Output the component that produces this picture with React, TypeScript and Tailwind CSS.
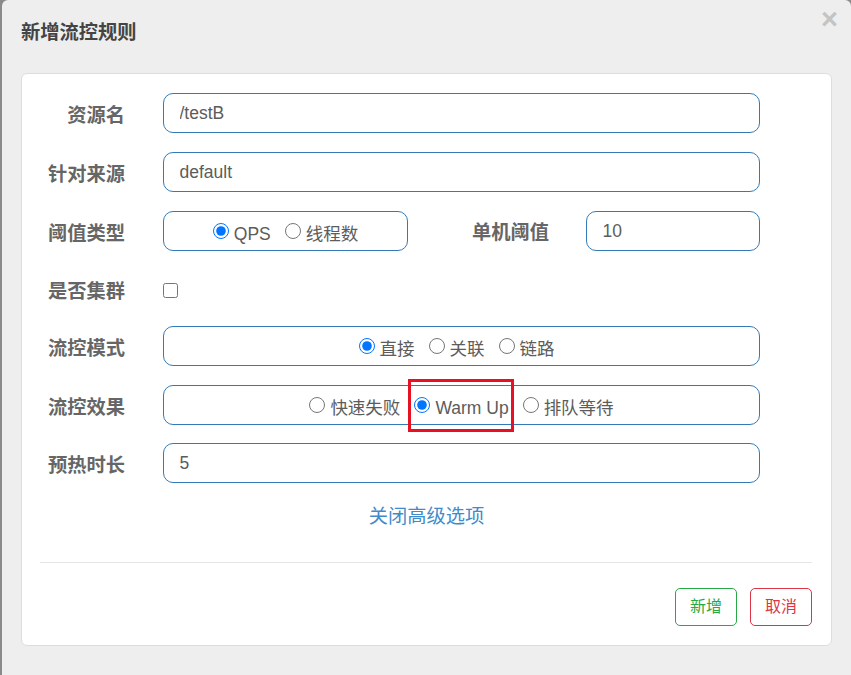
import React from 'react';

const fontStack = "font-['Liberation_Sans','Noto_Sans_CJK_SC',sans-serif]";

const Label = ({ children }: { children: React.ReactNode }) => (
  <label className="w-[103px] shrink-0 pt-[6px] text-right text-[19.25px] leading-[28px] font-bold text-[#666]">{children}</label>
);

const TextInput = ({ value, className = 'flex-1' }: { value: string; className?: string }) => (
  <input
    type="text"
    readOnly
    defaultValue={value}
    className={`${className} h-[40px] min-w-0 rounded-[10px] border border-[#337ab7] bg-white pl-[15.5px] pr-4 text-[17.5px] text-[#5c5c5c] outline-none`}
  />
);

const Radio = ({ name, text, checked = false }: { name: string; text: string; checked?: boolean }) => (
  <label className="flex items-center gap-[5px] text-[17.5px] leading-[24px] text-[#5c5c5c]">
    <input type="radio" name={name} defaultChecked={checked} className="m-0 h-4 w-4 shrink-0" />
    <span className="translate-y-[3px]">{text}</span>
  </label>
);

const RadioBox = ({ children, className = 'flex-1' }: { children: React.ReactNode; className?: string }) => (
  <div className={`${className} flex h-[40px] items-center justify-center gap-[14px] rounded-[10px] border border-[#337ab7] bg-white`}>
    {children}
  </div>
);

const Row = ({ label, children, className = 'mb-[19px]' }: { label: string; children: React.ReactNode; className?: string }) => (
  <div className={`${className} flex items-center gap-[38px]`}>
    <Label>{label}</Label>
    {children}
  </div>
);

export default function App() {
  return (
    <div className={`${fontStack} h-[675px] w-[851px] overflow-hidden bg-[#8a8a8a] pl-[2px]`}>
      <div className="h-full rounded-t-[6px] bg-[#eeeeee] pl-[19px] pr-[19px]">
        <div className="flex h-[73px] items-start justify-between">
          <h4 className="mt-[19px] text-[19.25px] leading-[28px] font-bold text-[#444]">新增流控规则</h4>
          <button className="mt-[3px] mr-[-6px] text-[29px] leading-[32px] font-bold text-[#c4c4c4]">×</button>
        </div>
        <div className="h-[573px] w-[811px] rounded-[6px] border border-[#dddddd] bg-white pt-[19px]">
          <div className="pr-[71px]">
            <Row label="资源名">
              <TextInput value="/testB" />
            </Row>
            <Row label="针对来源">
              <TextInput value="default" />
            </Row>
            <Row label="阈值类型">
              <RadioBox className="w-[245px]">
                <Radio name="grade" text="QPS" checked />
                <Radio name="grade" text="线程数" />
              </RadioBox>
              <div className="ml-[26px] flex items-center gap-[37px]">
                <span className="pt-[3px] text-[19.25px] leading-[28px] font-bold text-[#666]">单机阈值</span>
                <TextInput value="10" className="w-[174px]" />
              </div>
            </Row>
            <Row label="是否集群" className="mb-[19px] h-[37px]">
              <input type="checkbox" className="m-0 h-[15px] w-[15px] translate-y-[2px]" />
            </Row>
            <Row label="流控模式">
              <RadioBox className="flex-1 pr-[10px]">
                <Radio name="mode" text="直接" checked />
                <Radio name="mode" text="关联" />
                <Radio name="mode" text="链路" />
              </RadioBox>
            </Row>
            <Row label="流控效果" className="mb-[18px]">
              <div className="relative flex-1">
                <RadioBox className="w-full">
                  <Radio name="effect" text="快速失败" />
                  <Radio name="effect" text="Warm Up" checked />
                  <Radio name="effect" text="排队等待" />
                </RadioBox>
                <div className="absolute left-[245px] top-[-6px] h-[53px] w-[106px] border-[3px] border-[#e81123]" />
              </div>
            </Row>
            <Row label="预热时长" className="mb-[20px]">
              <TextInput value="5" />
            </Row>
          </div>
          <div className="text-center">
            <a className="text-[19.25px] leading-[28px] text-[#428bca]">关闭高级选项</a>
          </div>
          <div className="ml-[18px] mr-[19px] mt-[31px] border-t border-[#e5e5e5]" />
          <div className="mr-[19px] mt-[25px] flex justify-end gap-[13px]">
            <button className="h-[38px] w-[62px] rounded-[5px] border border-[#28a745] bg-white text-[16px] text-[#28a745]">新增</button>
            <button className="h-[38px] w-[62px] rounded-[5px] border border-[#dc3545] bg-white text-[16px] text-[#dc3545]">取消</button>
          </div>
        </div>
      </div>
    </div>
  );
}
